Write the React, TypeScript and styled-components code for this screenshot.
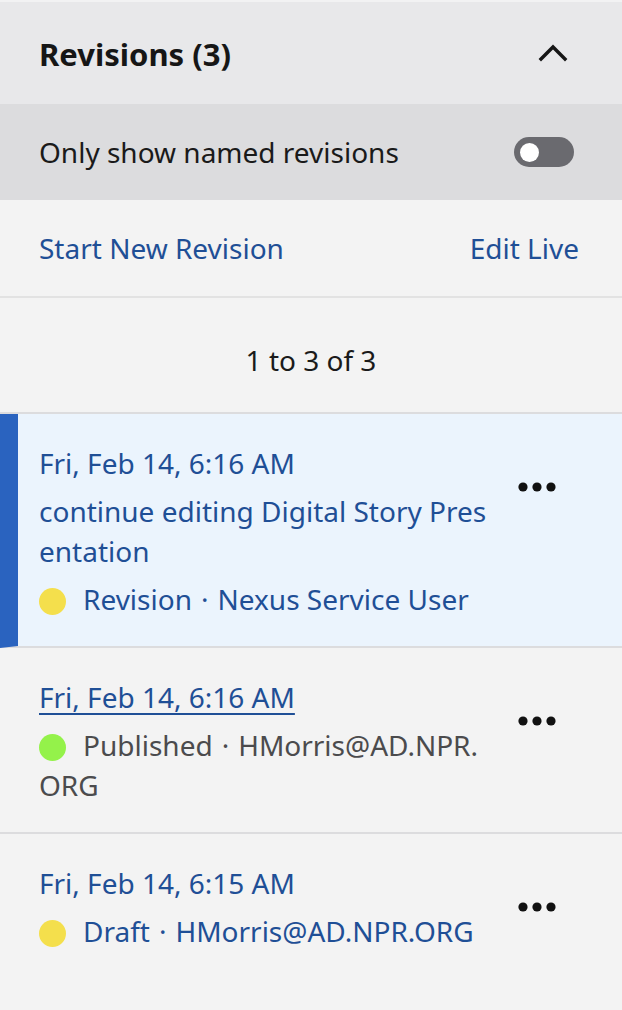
import React from 'react'
import styled, { createGlobalStyle } from 'styled-components'

const GlobalStyle = createGlobalStyle`
  html, body {
    margin: 0;
    padding: 0;
    background: #f3f3f3;
  }
  body {
    font-family: 'Noto Sans', 'Open Sans', sans-serif;
    -webkit-font-smoothing: antialiased;
  }
`

const Panel = styled.div`
  width: 622px;
  min-height: 1010px;
  background: #f3f3f3;
  border-top: 2px solid #f2f2f3;
  box-sizing: border-box;
`

const Header = styled.div`
  align-items: center;
  background: #e8e8ea;
  display: flex;
  height: 102px;
  justify-content: space-between;
  padding: 0 54px 0 39px;
`

const Title = styled.h2`
  color: #161616;
  font-size: 31px;
  font-weight: 700;
  margin: 0;
  padding: 2px 0 0;
`

const Collapse = styled.button`
  background: transparent;
  border: 0;
  cursor: pointer;
  display: flex;
  padding: 0;
`

const FilterRow = styled.div`
  align-items: center;
  background: #dcdcde;
  display: flex;
  height: 96px;
  justify-content: space-between;
  padding: 0 48px 0 39px;
`

const FilterLabel = styled.span`
  color: #1a1a1a;
  font-size: 28px;
`

const Toggle = styled.button`
  background: #6a6a6f;
  border: 0;
  border-radius: 15px;
  cursor: pointer;
  height: 30px;
  padding: 0;
  position: relative;
  width: 60px;
  &::after {
    background: #fff;
    border-radius: 50%;
    content: '';
    height: 19px;
    left: 6px;
    position: absolute;
    top: 5.5px;
    width: 19px;
  }
`

const Actions = styled.div`
  align-items: center;
  border-bottom: 2px solid #e2e2e2;
  display: flex;
  height: 96px;
  justify-content: space-between;
  padding: 0 43px 0 39px;
`

const ActionLink = styled.a`
  color: #1f4f96;
  cursor: pointer;
  font-size: 28px;
  text-decoration: none;
`

const Pagination = styled.div`
  align-items: center;
  border-bottom: 2px solid #dcdcde;
  box-sizing: border-box;
  color: #1a1a1a;
  display: flex;
  font-size: 28px;
  height: 116px;
  justify-content: center;
  padding-top: 10px;
`

const Item = styled.div<{ $selected?: boolean }>`
  background: ${({ $selected }) => ($selected ? '#ebf4fd' : 'transparent')};
  border-bottom: 2px solid #dcdcde;
  border-left: ${({ $selected }) => ($selected ? '18px solid #2a63bf' : '0')};
  display: flex;
  gap: 24px;
  padding: 29px 0 27px ${({ $selected }) => ($selected ? '21px' : '39px')};
  &:last-child {
    border-bottom: 0;
  }
`

const ItemBody = styled.div`
  display: flex;
  flex-direction: column;
  gap: 8px;
  width: 454px;
`

const ItemDate = styled.a<{ $underline?: boolean }>`
  align-self: flex-start;
  color: #1f4f96;
  cursor: pointer;
  font-size: 28px;
  line-height: 40px;
  text-decoration: ${({ $underline }) => ($underline ? 'underline' : 'none')};
  text-decoration-thickness: 2px;
  text-underline-offset: 5px;
`

const ItemName = styled.div`
  color: #1f4f96;
  font-size: 28px;
  line-height: 40px;
  word-break: break-all;
`

const Meta = styled.div<{ $muted?: boolean }>`
  color: ${({ $muted }) => ($muted ? '#4b4b4d' : '#1f4f96')};
  font-size: 28px;
  line-height: 40px;
  word-break: break-all;
`

const StatusDot = styled.span<{ $color: string }>`
  background: ${({ $color }) => $color};
  border-radius: 50%;
  display: inline-block;
  height: 27px;
  margin-right: 17px;
  vertical-align: -5px;
  width: 27px;
`

const Separator = styled.span`
  padding: 0 9px;
`

const MoreButton = styled.button`
  align-self: flex-start;
  background: transparent;
  border: 0;
  cursor: pointer;
  display: flex;
  margin-top: 38px;
  padding: 0;
`

const Chevron = () => (
  <svg width="30" height="18" viewBox="0 0 30 18" fill="none">
    <path d="M3 15 L15 3 L27 15" stroke="#161616" strokeWidth="3.4" strokeLinecap="square" />
  </svg>
)

const Dots = () => (
  <svg width="40" height="12" viewBox="0 0 40 12">
    <circle cx="6" cy="6" r="4.6" fill="#111" />
    <circle cx="20" cy="6" r="4.6" fill="#111" />
    <circle cx="34" cy="6" r="4.6" fill="#111" />
  </svg>
)

interface Revision {
  date: string
  name?: string
  status: string
  color: string
  user: string
  selected?: boolean
  published?: boolean
}

const revisions: Revision[] = [
  {
    date: 'Fri, Feb 14, 6:16 AM',
    name: 'continue editing Digital Story Presentation',
    status: 'Revision',
    color: '#f4df4c',
    user: 'Nexus Service User',
    selected: true,
  },
  {
    date: 'Fri, Feb 14, 6:16 AM',
    status: 'Published',
    color: '#94f24a',
    user: 'HMorris@AD.NPR.ORG',
    published: true,
  },
  {
    date: 'Fri, Feb 14, 6:15 AM',
    status: 'Draft',
    color: '#f4df4c',
    user: 'HMorris@AD.NPR.ORG',
  },
]

export default function App() {
  return (
    <>
      <GlobalStyle />
      <Panel>
        <Header>
          <Title>Revisions (3)</Title>
          <Collapse aria-label="Collapse">
            <Chevron />
          </Collapse>
        </Header>

        <FilterRow>
          <FilterLabel>Only show named revisions</FilterLabel>
          <Toggle aria-label="Only show named revisions" />
        </FilterRow>

        <Actions>
          <ActionLink>Start New Revision</ActionLink>
          <ActionLink>Edit Live</ActionLink>
        </Actions>

        <Pagination>1 to 3 of 3</Pagination>

        {revisions.map((rev, i) => (
          <Item key={i} $selected={rev.selected}>
            <ItemBody>
              <ItemDate $underline={rev.published}>{rev.date}</ItemDate>
              {rev.name && <ItemName>{rev.name}</ItemName>}
              <Meta $muted={rev.published}>
                <StatusDot $color={rev.color} />
                {rev.status}
                <Separator>·</Separator>
                {rev.user}
              </Meta>
            </ItemBody>
            <MoreButton aria-label="More actions">
              <Dots />
            </MoreButton>
          </Item>
        ))}
      </Panel>
    </>
  )
}
